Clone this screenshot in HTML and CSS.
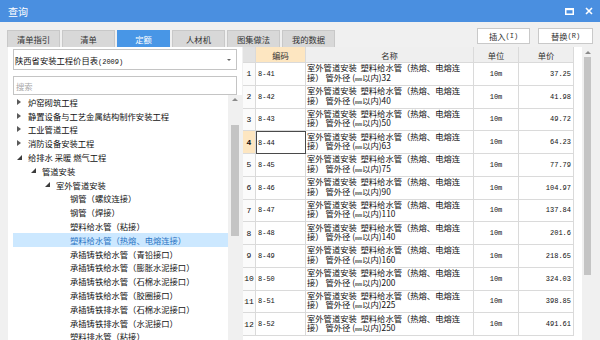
FILE: index.html
```html
<!DOCTYPE html>
<html>
<head>
<meta charset="utf-8">
<link rel="stylesheet" href="styles.css">
</head>
<body>
<div class="window">
  <div class="titlebar">
    <span class="title">查询</span>
    <div class="winbtns">
      <svg class="ico-max" width="9" height="7" viewBox="0 0 9 7"><rect x="0.75" y="0.75" width="7.5" height="5.5" fill="none" stroke="#fff" stroke-width="1.5"/><rect x="0" y="0" width="9" height="2.2" fill="#fff"/></svg>
      <svg class="ico-close" width="8" height="8" viewBox="0 0 8 8"><path d="M1 1 L7 7 M7 1 L1 7" stroke="#fff" stroke-width="1.6"/></svg>
    </div>
  </div>
  <div class="toolbar">
    <div class="tabs">
      <div class="tab">清单指引</div>
      <div class="tab">清单</div>
      <div class="tab active">定额</div>
      <div class="tab">人材机</div>
      <div class="tab">图集做法</div>
      <div class="tab">我的数据</div>
    </div>
    <div class="actions">
      <div class="btn">插入<span class="asc">(I)</span></div>
      <div class="btn wide">替换<span class="asc">(R)</span></div>
    </div>
  </div>
  <div class="main">
    <div class="left">
      <div class="combo"><span>陕西省安装工程价目表<span class="asc">(2009)</span></span><span class="caret"></span></div>
      <div class="search">搜索</div>
      <div class="treewrap">
        <div class="tree">
          <div class="node l0"><span class="arr"><svg width="4" height="6" viewBox="0 0 4 6"><path d="M0 0 L4 3 L0 6Z" fill="#5a5a5a"/></svg></span><span class="lbl">炉窑砌筑工程</span></div>
          <div class="node l0"><span class="arr"><svg width="4" height="6" viewBox="0 0 4 6"><path d="M0 0 L4 3 L0 6Z" fill="#5a5a5a"/></svg></span><span class="lbl">静置设备与工艺金属结构制作安装工程</span></div>
          <div class="node l0"><span class="arr"><svg width="4" height="6" viewBox="0 0 4 6"><path d="M0 0 L4 3 L0 6Z" fill="#5a5a5a"/></svg></span><span class="lbl">工业管道工程</span></div>
          <div class="node l0"><span class="arr"><svg width="4" height="6" viewBox="0 0 4 6"><path d="M0 0 L4 3 L0 6Z" fill="#5a5a5a"/></svg></span><span class="lbl">消防设备安装工程</span></div>
          <div class="node l0"><span class="arr"><svg width="5" height="5" viewBox="0 0 5 5"><path d="M5 0 L5 5 L0 5Z" fill="#3c3c3c"/></svg></span><span class="lbl">给排水 采暖 燃气工程</span></div>
          <div class="node l1"><span class="arr"><svg width="5" height="5" viewBox="0 0 5 5"><path d="M5 0 L5 5 L0 5Z" fill="#3c3c3c"/></svg></span><span class="lbl">管道安装</span></div>
          <div class="node l2"><span class="arr"><svg width="5" height="5" viewBox="0 0 5 5"><path d="M5 0 L5 5 L0 5Z" fill="#3c3c3c"/></svg></span><span class="lbl">室外管道安装</span></div>
          <div class="node l3"><span class="arr"></span><span class="lbl">钢管（螺纹连接）</span></div>
          <div class="node l3"><span class="arr"></span><span class="lbl">钢管（焊接）</span></div>
          <div class="node l3"><span class="arr"></span><span class="lbl">塑料给水管（粘接）</span></div>
          <div class="node l3 selected"><span class="arr"></span><span class="lbl">塑料给水管（热熔、电熔连接）</span></div>
          <div class="node l3"><span class="arr"></span><span class="lbl">承插铸铁给水管（青铅接口）</span></div>
          <div class="node l3"><span class="arr"></span><span class="lbl">承插铸铁给水管（膨胀水泥接口）</span></div>
          <div class="node l3"><span class="arr"></span><span class="lbl">承插铸铁给水管（石棉水泥接口）</span></div>
          <div class="node l3"><span class="arr"></span><span class="lbl">承插铸铁给水管（胶圈接口）</span></div>
          <div class="node l3"><span class="arr"></span><span class="lbl">承插铸铁排水管（石棉水泥接口）</span></div>
          <div class="node l3"><span class="arr"></span><span class="lbl">承插铸铁排水管（水泥接口）</span></div>
          <div class="node l3"><span class="arr"></span><span class="lbl">塑料排水管（粘接）</span></div>
        </div>
        <div class="vscroll tree-scroll"><span class="up"></span><span class="thumb"></span></div>
      </div>
    </div>
    <div class="gridwrap">
      <div class="grid">
        <div class="hc rn"></div><div class="hc code">编码</div><div class="hc">名称</div><div class="hc">单位</div><div class="hc">单价</div>

        <div class="c rn">1</div><div class="c code">8-41</div><div class="c name"><span>室外管道安装&nbsp; 塑料给水管（热熔、电熔连<br>接） 管外径 (<span class="mm">mm</span>以内)32</span></div><div class="c unit">10m</div><div class="c price">37.25</div>
        <div class="c rn">2</div><div class="c code">8-42</div><div class="c name"><span>室外管道安装&nbsp; 塑料给水管（热熔、电熔连<br>接） 管外径 (<span class="mm">mm</span>以内)40</span></div><div class="c unit">10m</div><div class="c price">41.98</div>
        <div class="c rn">3</div><div class="c code">8-43</div><div class="c name"><span>室外管道安装&nbsp; 塑料给水管（热熔、电熔连<br>接） 管外径 (<span class="mm">mm</span>以内)50</span></div><div class="c unit">10m</div><div class="c price">49.72</div>
        <div class="c rn cur">4</div><div class="c code sel">8-44</div><div class="c name"><span>室外管道安装&nbsp; 塑料给水管（热熔、电熔连<br>接） 管外径 (<span class="mm">mm</span>以内)63</span></div><div class="c unit">10m</div><div class="c price">64.23</div>
        <div class="c rn">5</div><div class="c code">8-45</div><div class="c name"><span>室外管道安装&nbsp; 塑料给水管（热熔、电熔连<br>接） 管外径 (<span class="mm">mm</span>以内)75</span></div><div class="c unit">10m</div><div class="c price">77.79</div>
        <div class="c rn">6</div><div class="c code">8-46</div><div class="c name"><span>室外管道安装&nbsp; 塑料给水管（热熔、电熔连<br>接） 管外径 (<span class="mm">mm</span>以内)90</span></div><div class="c unit">10m</div><div class="c price">104.97</div>
        <div class="c rn">7</div><div class="c code">8-47</div><div class="c name"><span>室外管道安装&nbsp; 塑料给水管（热熔、电熔连<br>接） 管外径 (<span class="mm">mm</span>以内)110</span></div><div class="c unit">10m</div><div class="c price">137.84</div>
        <div class="c rn">8</div><div class="c code">8-48</div><div class="c name"><span>室外管道安装&nbsp; 塑料给水管（热熔、电熔连<br>接） 管外径 (<span class="mm">mm</span>以内)140</span></div><div class="c unit">10m</div><div class="c price">201.6</div>
        <div class="c rn">9</div><div class="c code">8-49</div><div class="c name"><span>室外管道安装&nbsp; 塑料给水管（热熔、电熔连<br>接） 管外径 (<span class="mm">mm</span>以内)160</span></div><div class="c unit">10m</div><div class="c price">218.65</div>
        <div class="c rn">10</div><div class="c code">8-50</div><div class="c name"><span>室外管道安装&nbsp; 塑料给水管（热熔、电熔连<br>接） 管外径 (<span class="mm">mm</span>以内)200</span></div><div class="c unit">10m</div><div class="c price">324.03</div>
        <div class="c rn">11</div><div class="c code">8-51</div><div class="c name"><span>室外管道安装&nbsp; 塑料给水管（热熔、电熔连<br>接） 管外径 (<span class="mm">mm</span>以内)225</span></div><div class="c unit">10m</div><div class="c price">398.85</div>
        <div class="c rn">12</div><div class="c code">8-52</div><div class="c name"><span>室外管道安装&nbsp; 塑料给水管（热熔、电熔连<br>接） 管外径 (<span class="mm">mm</span>以内)250</span></div><div class="c unit">10m</div><div class="c price">491.61</div>
      </div>
      <div class="vscroll grid-scroll"><span class="up"></span><span class="thumb"></span></div>
    </div>
  </div>
</div>
</body>
</html>
```

FILE: styles.css
```css
* { box-sizing: border-box; margin: 0; padding: 0; }
html, body { width: 600px; height: 340px; overflow: hidden; }
body {
  background: #f0f0f0;
  font-family: "Noto Sans CJK SC", "Noto Sans", sans-serif;
  font-size: 8.3px;
  color: #111;
}
.window { width: 600px; height: 340px; display: flex; flex-direction: column; }

.titlebar {
  height: 22px;
  flex: 0 0 22px;
  background: #4a8fe0;
  display: flex;
  align-items: center;
  padding: 0 7px 0 8px;
}
.title { color: #fff; font-size: 10px; flex: 1; }
.winbtns { display: flex; align-items: center; gap: 11px; }

.toolbar {
  height: 25px;
  flex: 0 0 25px;
  display: flex;
  align-items: flex-end;
  padding: 0 7px 0 7px;
}
.tabs { display: flex; gap: 2px; flex: 1; }
.tab {
  width: 53px;
  height: 17px;
  display: flex;
  align-items: center;
  justify-content: center;
  background: #d8d8d8;
  border: 1px solid #c8c8c8;
  border-bottom: none;
  color: #333;
}
.tab.active { background: #4896e6; border-color: #4896e6; color: #fff; }
.actions { display: flex; gap: 8px; align-self: flex-start; margin-top: 6px; }
.btn {
  width: 53px;
  height: 16px;
  background: #fff;
  border: 1px solid #c9c9c9;
  display: flex;
  align-items: center;
  justify-content: center;
  color: #333;
}
.btn.wide { width: 55px; }
.asc { font-family: "Liberation Mono", monospace; font-size: 7px; }

.main {
  flex: 1;
  display: flex;
  gap: 1px;
  padding-left: 8px;
  overflow: hidden;
}
.left {
  width: 234px;
  flex: 0 0 234px;
  background: #fff;
  display: flex;
  flex-direction: column;
  padding-top: 2px;
}
.combo {
  margin: 0 5px;
  height: 21px;
  border: 1px solid #c4c4c4;
  display: flex;
  align-items: center;
  justify-content: space-between;
  padding: 0 5px 0 1px;
}
.caret {
  width: 0; height: 0;
  border-left: 2px solid transparent;
  border-right: 2px solid transparent;
  border-top: 2px solid #666;
}
.search {
  margin: 6px 5px 0;
  height: 19px;
  border: 1px solid #c4c4c4;
  display: flex;
  align-items: center;
  padding-left: 2px;
  color: #a8a8a8;
}
.treewrap { flex: 1; display: flex; overflow: hidden; }
.tree { flex: 1; padding-left: 5px; overflow: hidden; }
.node {
  height: 13.8px;
  display: flex;
  align-items: center;
  white-space: nowrap;
}
.node.l1 { padding-left: 14px; }
.node.l2 { padding-left: 28px; }
.node.l3 { padding-left: 42px; }
.node.selected { background: #cce8ff; }
.node.selected .lbl { color: #2a74c4; }
.arr { width: 12px; flex: 0 0 12px; display: flex; justify-content: center; align-items: center; }
.lbl { margin-left: 3px; }

.vscroll {
  background: #f0f0f0;
  display: flex;
  flex-direction: column;
  align-items: center;
}
.up {
  width: 0; height: 0;
  border-left: 3px solid transparent;
  border-right: 3px solid transparent;
  border-bottom: 3px solid #8a8a8a;
}
.thumb { background: #c4c4c4; }
.tree-scroll { width: 14px; flex: 0 0 14px; padding-top: 3px; }
.tree-scroll .thumb { width: 8px; height: 111px; margin-top: 24px; }

.gridwrap {
  width: 350px;
  flex: 0 0 350px;
  background: #fff;
  display: flex;
}
.grid {
  flex: 1;
  display: grid;
  grid-template-columns: 13px 50px 168px 45px 55px;
  grid-template-rows: 16px;
  grid-auto-rows: 22.75px;
  align-content: start;
  overflow: hidden;
}
.hc, .c {
  border-right: 1px solid #dadada;
  border-bottom: 1px solid #dadada;
  display: flex;
  align-items: center;
  white-space: nowrap;
}
.hc { background: #efefef; justify-content: center; color: #333; }
.hc.rn { background: #e2e2e2; }
.hc.code { background: #fde6c1; }
.c.rn {
  justify-content: center;
  font-family: "Liberation Mono", monospace;
  font-size: 8px;
  background: #fbfbfb;
}
.c.rn.cur { background: #fde6c1; font-weight: bold; }
.c.code { font-family: "Liberation Mono", monospace; font-size: 7px; padding-left: 2px; }
.c.code.sel { border: 1px solid #4a4a4a; padding-left: 1px; }
.c.name { line-height: 9.5px; padding-left: 1px; }
.mm { font-family: "Liberation Mono", monospace; font-size: 6px; }
.c.unit { justify-content: center; font-family: "Liberation Mono", monospace; font-size: 7px; }
.c.price { justify-content: flex-end; padding-right: 2px; font-family: "Liberation Mono", monospace; font-size: 7px; }

.grid-scroll { width: 11px; flex: 0 0 11px; padding-top: 4px; }
.grid-scroll .thumb { width: 7px; height: 218px; margin-top: 3px; }
```
